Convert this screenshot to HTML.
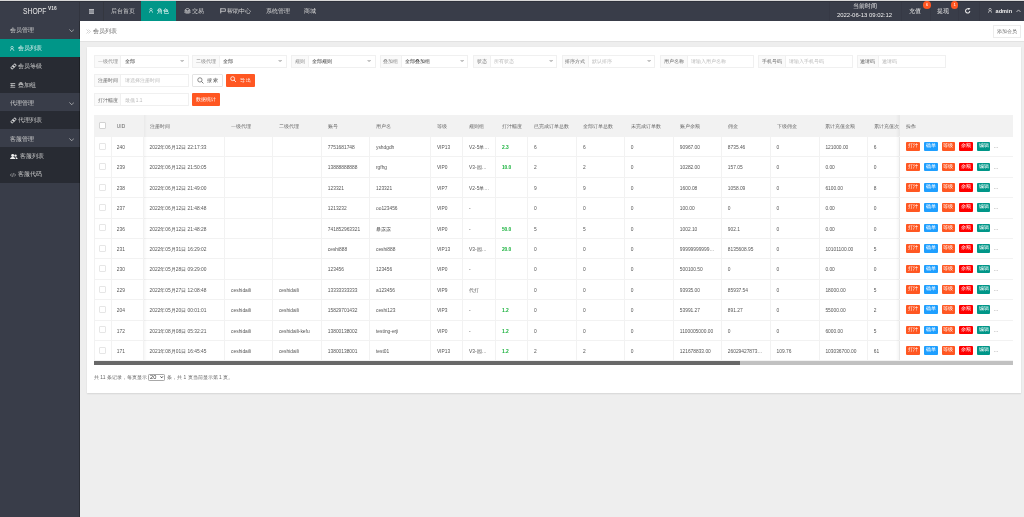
<!DOCTYPE html><html><head><meta charset="utf-8"><style>
*{margin:0;padding:0;box-sizing:border-box}
html,body{width:1024px;height:517px;overflow:hidden;background:#eeeeee;font-family:"Liberation Sans",sans-serif;color:#333}
#root{position:absolute;left:0;top:0;width:1024px;height:517px;will-change:transform}
.a{position:absolute;white-space:nowrap}
.nav{top:1px;height:20px;color:#d4d4d4;font-size:5.6px;line-height:20px}
.on{background:#009688;color:#fff}
.si{left:0;width:80px;font-size:5.6px;color:#d0d0d0}
.si.c{background:#282b33}
.si.on{background:#009688;color:#eaf5f4}
.grp{border:1px solid #f0f0f0;background:#fff}
.grp .lb{position:absolute;left:0;top:0;bottom:0;background:#fafafa;border-right:1px solid #f0f0f0;color:#888;font-size:4.7px;text-align:center}
.grp .ip{position:absolute;top:0;bottom:0;font-size:4.7px;color:#333;padding-left:3.2px}
.grp .ph{color:#bababa}
.btn{color:#fff;background:#ff5722;font-size:4.8px;text-align:center;border-radius:1px}
.tb{font-size:4.85px;color:#555}
.ck{width:7px;height:7px;border:1px solid #d8d8d8;background:#fff;border-radius:1px}
.ob{height:8.7px;line-height:8.7px;width:13.7px;font-size:4.7px;color:#fff;text-align:center;border-radius:1px}
.g{color:#16b13a;font-weight:bold}
</style></head><body><div id="root">
<div class="a" style="left:0;top:0;width:1024px;height:1px;background:#d9d9d9"></div>
<div class="a" style="left:0;top:1px;width:1024px;height:20px;background:#393d49;border-top:1px solid #2f323c"></div>
<div class="a" style="left:79px;top:2px;width:1px;height:19px;background:#32353f"></div>
<div class="a" style="left:22.5px;top:7.8px;font-size:8.2px;line-height:8.2px;color:#e8e8e8;transform:scaleX(0.83);transform-origin:0 0">SHOPF</div>
<div class="a" style="left:47.9px;top:6.3px;font-size:5.4px;line-height:5.4px;color:#e0e0e0;font-weight:bold;letter-spacing:0px;transform:scaleX(0.9);transform-origin:0 0">V16</div>
<div class="a" style="left:102.5px;top:2px;width:1px;height:19px;background:#34373f"></div>
<div class="a" style="left:89px;top:8.6px;width:5px;height:5.3px;background:#8e9199"></div>
<div class="a" style="left:89px;top:8.6px;width:5px;height:1.2px;background:#b4b6bb"></div>
<div class="a" style="left:89px;top:12.6px;width:5px;height:1.2px;background:#a8aab0"></div>
<div class="a nav " style="left:103px;width:38px;padding-left:7.5px">后台首页</div>
<div class="a nav on" style="left:141px;width:35px;padding-left:7.5px"><svg width="4" height="5" viewBox="0 0 8 10" style="vertical-align:0.2px;margin-left:0.9px;margin-right:3.6px"><circle cx="4" cy="3" r="2.3" fill="none" stroke="#e6f4f3" stroke-width="1.2"/><path d="M0.8 9.8 V8.3 C0.8 6.6 2.3 5.7 4 5.7 C5.7 5.7 7.2 6.6 7.2 8.3 V9.8" fill="none" stroke="#e6f4f3" stroke-width="1.2"/></svg>角色</div>
<div class="a nav " style="left:176px;width:36.3px;padding-left:7.5px"><svg width="7" height="5.5" viewBox="0 0 14 11" style="vertical-align:-0.8px;margin-right:1.4px"><path d="M2 6 C2 2.5 4.5 1 7 1 C9.5 1 12 2.5 12 6 Z" fill="none" stroke="#ddd" stroke-width="1.4"/><path d="M5 3.5 V6 M9 3.5 V6" stroke="#ddd" stroke-width="1"/><path d="M0.5 8.2 H13.5" stroke="#ddd" stroke-width="1.6"/><path d="M3 10.3 H11" stroke="#ddd" stroke-width="1.2"/></svg>交易</div>
<div class="a nav " style="left:212.3px;width:46.2px;padding-left:7.5px"><svg width="6" height="5.5" viewBox="0 0 12 11" style="vertical-align:-0.8px;margin-right:0.8px"><path d="M1.5 0.5 V10.8" stroke="#e4e4e4" stroke-width="1.6"/><path d="M1.5 1.5 H10.8 V6.6 H1.5" fill="none" stroke="#e4e4e4" stroke-width="1.4"/></svg>帮助中心</div>
<div class="a nav " style="left:258.5px;width:38.2px;padding-left:7.5px">系统管理</div>
<div class="a nav " style="left:296.7px;width:28px;padding-left:7.5px">商城</div>
<div class="a" style="left:828.6px;top:2px;width:1px;height:19px;background:#363945"></div>
<div class="a" style="left:901.3px;top:2px;width:1px;height:19px;background:#363945"></div>
<div class="a" style="left:929.5px;top:2px;width:1px;height:19px;background:#363945"></div>
<div class="a" style="left:957.5px;top:2px;width:1px;height:19px;background:#363945"></div>
<div class="a" style="left:979.3px;top:2px;width:1px;height:19px;background:#363945"></div>
<div class="a" style="left:828px;top:2.8px;width:73px;text-align:center;font-size:5.6px;line-height:6px;color:#e8e8e8">当前时间</div>
<div class="a" style="left:828px;top:12.4px;width:73px;text-align:center;font-size:5.95px;line-height:6px;color:#f0f0f0">2022-06-13 09:02:12</div>
<div class="a" style="left:908.8px;top:8.2px;font-size:5.6px;line-height:6px;color:#e6e6e6">充值</div>
<div class="a" style="left:923.1px;top:1.1px;width:7.6px;height:7.6px;border-radius:50%;background:#ff5722;color:#fff;font-size:4.4px;line-height:7.6px;text-align:center">6</div>
<div class="a" style="left:936.9px;top:8.2px;font-size:5.6px;line-height:6px;color:#e6e6e6">提现</div>
<div class="a" style="left:950.9px;top:1.1px;width:7.6px;height:7.6px;border-radius:50%;background:#ff5722;color:#fff;font-size:4.4px;line-height:7.6px;text-align:center">1</div>
<svg class="a" style="left:965.4px;top:8.4px" width="6" height="5.6" viewBox="0 0 10.7 10"><path d="M8.6 5.6 A3.8 3.8 0 1 1 5.6 1.4" fill="none" stroke="#eee" stroke-width="1.9"/><path d="M4.6 -0.4 L9.6 0.6 L6.6 4.2 Z" fill="#eee"/></svg>
<svg class="a" style="left:987.6px;top:8.2px" width="4.2" height="5.2" viewBox="0 0 8 10"><circle cx="4" cy="3" r="2.3" fill="none" stroke="#e6e6e6" stroke-width="1.2"/><path d="M0.8 9.8 V8.3 C0.8 6.6 2.3 5.7 4 5.7 C5.7 5.7 7.2 6.6 7.2 8.3 V9.8" fill="none" stroke="#e6e6e6" stroke-width="1.2"/></svg>
<div class="a" style="left:995.6px;top:8px;font-size:5.6px;line-height:6px;color:#eee;font-weight:bold">admin</div>
<svg class="a" style="left:1015.5px;top:9px" width="5" height="3.5" viewBox="0 0 10 7"><path d="M1 6 L5 1.8 L9 6" fill="none" stroke="#e6e6e6" stroke-width="1.4"/></svg>
<div class="a" style="left:0;top:21px;width:80px;height:496px;background:#393d49"></div>
<div class="a si" style="top:21.00px;height:17.95px;line-height:17.95px;padding-left:9.8px;padding-top:0.60px">会员管理</div>
<svg class="a" style="left:68.8px;top:28.50px" width="5.4" height="3.4" viewBox="0 0 10.8 6.8"><path d="M0.8 0.8 L5.4 5.6 L10 0.8" fill="none" stroke="#d0d0d0" stroke-width="1.3"/></svg>
<div class="a si on" style="top:38.95px;height:17.95px;line-height:17.95px;padding-left:17.8px;padding-top:0.60px">会员列表</div>
<div class="a si c" style="top:56.90px;height:17.95px;line-height:17.95px;padding-left:17.8px;padding-top:1.40px">会员等级</div>
<div class="a si c" style="top:74.85px;height:17.95px;line-height:17.95px;padding-left:17.8px;padding-top:2.00px">叠加组</div>
<div class="a si" style="top:92.80px;height:17.95px;line-height:17.95px;padding-left:9.8px;padding-top:2.20px">代理管理</div>
<svg class="a" style="left:68.8px;top:101.90px" width="5.4" height="3.4" viewBox="0 0 10.8 6.8"><path d="M0.8 0.8 L5.4 5.6 L10 0.8" fill="none" stroke="#d0d0d0" stroke-width="1.3"/></svg>
<div class="a si c" style="top:110.75px;height:17.95px;line-height:17.95px;padding-left:17.8px;padding-top:1.20px">代理列表</div>
<div class="a si" style="top:128.70px;height:17.95px;line-height:17.95px;padding-left:9.8px;padding-top:2.20px">客服管理</div>
<svg class="a" style="left:68.8px;top:137.80px" width="5.4" height="3.4" viewBox="0 0 10.8 6.8"><path d="M0.8 0.8 L5.4 5.6 L10 0.8" fill="none" stroke="#d0d0d0" stroke-width="1.3"/></svg>
<div class="a si c" style="top:146.65px;height:17.95px;line-height:17.95px;padding-left:20.2px;padding-top:1.70px">客服列表</div>
<div class="a si c" style="top:164.60px;height:17.95px;line-height:17.95px;padding-left:17.8px;padding-top:1.80px">客服代码</div>
<svg class="a" style="left:10.4px;top:45.55px" width="4.2" height="5.2" viewBox="0 0 8 10"><circle cx="4" cy="3" r="2.3" fill="none" stroke="#e6f4f3" stroke-width="1.2"/><path d="M0.8 9.8 V8.3 C0.8 6.6 2.3 5.7 4 5.7 C5.7 5.7 7.2 6.6 7.2 8.3 V9.8" fill="none" stroke="#e6f4f3" stroke-width="1.2"/></svg>
<svg class="a" style="left:9.9px;top:62.80px" width="7" height="7" viewBox="0 0 18 18"><g transform="rotate(-45 9 9)" fill="none" stroke="#f0f0f0" stroke-width="2.2"><rect x="1.2" y="6.2" width="8.6" height="5.6" rx="2.8"/><rect x="8.2" y="6.2" width="8.6" height="5.6" rx="2.8"/></g></svg>
<svg class="a" style="left:9.9px;top:116.65px" width="7" height="7" viewBox="0 0 18 18"><g transform="rotate(-45 9 9)" fill="none" stroke="#f0f0f0" stroke-width="2.2"><rect x="1.2" y="6.2" width="8.6" height="5.6" rx="2.8"/><rect x="8.2" y="6.2" width="8.6" height="5.6" rx="2.8"/></g></svg>
<svg class="a" style="left:10px;top:82.85px" width="5.6" height="4.8" viewBox="0 0 10 9"><path d="M0.5 1 H9.5 M0.5 4.5 H9.5 M0.5 8 H9.5" fill="none" stroke="#e6e6e6" stroke-width="1.3"/><path d="M3.2 2.5 V6.5" stroke="#e6e6e6" stroke-width="1.3"/></svg>
<svg class="a" style="left:10.3px;top:153.85px" width="7.7" height="5.6" viewBox="0 0 13.75 10"><circle cx="4.8" cy="2.7" r="2.6" fill="#f0f0f0"/><path d="M0 10 C0 6.6 2.3 5.5 4.8 5.5 C7.3 5.5 9.6 6.6 9.6 10 Z" fill="#f0f0f0"/><circle cx="9.9" cy="2.9" r="2.1" fill="#f0f0f0"/><path d="M10.1 5.6 C12.2 5.6 13.75 6.8 13.75 10 H10.5" fill="#f0f0f0"/></svg>
<svg class="a" style="left:9.8px;top:172.80px" width="6" height="4" viewBox="0 0 12 8"><path d="M3.5 1 L0.8 4 L3.5 7 M8.5 1 L11.2 4 L8.5 7 M7 0.5 L5 7.5" fill="none" stroke="#ddd" stroke-width="1"/></svg>
<div class="a" style="left:80px;top:21px;width:944px;height:20px;background:#fff"></div>
<div class="a" style="left:80px;top:41px;width:944px;height:1px;background:#e2e2e2"></div>
<svg class="a" style="left:86px;top:29px" width="5.2" height="5" viewBox="0 0 10.4 10"><path d="M1 1 L5 5 L1 9 M5 1 L9 5 L5 9" fill="none" stroke="#aaa" stroke-width="1"/></svg>
<div class="a" style="left:92.8px;top:28.4px;font-size:5.6px;line-height:6px;color:#666">会员列表</div>
<div class="a" style="left:993.3px;top:25.3px;width:27.3px;height:12.4px;border:1px solid #ececec;background:#fff;font-size:4.8px;line-height:10.4px;padding-top:0.6px;text-align:center;color:#777">添加会员</div>
<div class="a" style="left:79px;top:21px;width:1px;height:18px;background:rgba(0,0,0,.28)"></div>
<div class="a" style="left:79px;top:57px;width:1px;height:460px;background:rgba(0,0,0,.28)"></div>
<div class="a" style="left:86.5px;top:46.7px;width:934.4px;height:346.1px;background:#fff;box-shadow:0 1px 1.5px rgba(0,0,0,.1),0 0 1px rgba(0,0,0,.06)"></div>
<div class="a grp" style="left:94.2px;top:55.3px;width:94.5px;height:12.5px"><div class="lb" style="width:26.2px;line-height:10.5px;padding-top:0.9px;color:#888">一级代理</div><div class="ip" style="left:26.2px;right:0;line-height:10.5px;padding-top:0.9px">全部</div><svg class="a" style="right:3.6px;top:3.65px" width="4.2" height="2.5" viewBox="0 0 8 4.8"><path d="M0 0 H8 L4 4.8 Z" fill="#c2c2c2"/></svg></div>
<div class="a grp" style="left:192.4px;top:55.3px;width:94.4px;height:12.5px"><div class="lb" style="width:26.2px;line-height:10.5px;padding-top:0.9px;color:#888">二级代理</div><div class="ip" style="left:26.2px;right:0;line-height:10.5px;padding-top:0.9px">全部</div><svg class="a" style="right:3.6px;top:3.65px" width="4.2" height="2.5" viewBox="0 0 8 4.8"><path d="M0 0 H8 L4 4.8 Z" fill="#c2c2c2"/></svg></div>
<div class="a grp" style="left:291.3px;top:55.3px;width:84.4px;height:12.5px"><div class="lb" style="width:16.4px;line-height:10.5px;padding-top:0.9px;color:#888">规则</div><div class="ip" style="left:16.4px;right:0;line-height:10.5px;padding-top:0.9px">全部规则</div><svg class="a" style="right:3.6px;top:3.65px" width="4.2" height="2.5" viewBox="0 0 8 4.8"><path d="M0 0 H8 L4 4.8 Z" fill="#c2c2c2"/></svg></div>
<div class="a grp" style="left:379.6px;top:55.3px;width:88.9px;height:12.5px"><div class="lb" style="width:21.4px;line-height:10.5px;padding-top:0.9px;color:#888">叠加组</div><div class="ip" style="left:21.4px;right:0;line-height:10.5px;padding-top:0.9px">全部叠加组</div><svg class="a" style="right:3.6px;top:3.65px" width="4.2" height="2.5" viewBox="0 0 8 4.8"><path d="M0 0 H8 L4 4.8 Z" fill="#c2c2c2"/></svg></div>
<div class="a grp" style="left:473.3px;top:55.3px;width:84.0px;height:12.5px"><div class="lb" style="width:16.4px;line-height:10.5px;padding-top:0.9px;color:#777">状态</div><div class="ip ph" style="left:16.4px;right:0;line-height:10.5px;padding-top:0.9px">所有状态</div><svg class="a" style="right:3.6px;top:3.65px" width="4.2" height="2.5" viewBox="0 0 8 4.8"><path d="M0 0 H8 L4 4.8 Z" fill="#c2c2c2"/></svg></div>
<div class="a grp" style="left:561.6px;top:55.3px;width:93.7px;height:12.5px"><div class="lb" style="width:26.4px;line-height:10.5px;padding-top:0.9px;color:#666">排序方式</div><div class="ip ph" style="left:26.4px;right:0;line-height:10.5px;padding-top:0.9px">默认排序</div><svg class="a" style="right:3.6px;top:3.65px" width="4.2" height="2.5" viewBox="0 0 8 4.8"><path d="M0 0 H8 L4 4.8 Z" fill="#c2c2c2"/></svg></div>
<div class="a grp" style="left:660.0px;top:55.3px;width:94.0px;height:12.5px"><div class="lb" style="width:26.7px;line-height:10.5px;padding-top:0.9px;color:#666">用户名称</div><div class="ip ph" style="left:26.7px;right:0;line-height:10.5px;padding-top:0.9px">请输入用户名称</div></div>
<div class="a grp" style="left:758.4px;top:55.3px;width:94.3px;height:12.5px"><div class="lb" style="width:26.4px;line-height:10.5px;padding-top:0.9px;color:#666">手机号码</div><div class="ip ph" style="left:26.4px;right:0;line-height:10.5px;padding-top:0.9px">请输入手机号码</div></div>
<div class="a grp" style="left:856.8px;top:55.3px;width:89.2px;height:12.5px"><div class="lb" style="width:20.9px;line-height:10.5px;padding-top:0.9px;color:#666">邀请码</div><div class="ip ph" style="left:20.9px;right:0;line-height:10.5px;padding-top:0.9px">邀请码</div></div>
<div class="a grp" style="left:94.2px;top:73.6px;width:94.5px;height:13.2px"><div class="lb" style="width:26.2px;line-height:11.2px;padding-top:0.9px;color:#666">注册时间</div><div class="ip ph" style="left:26.2px;right:0;line-height:11.2px;padding-top:0.9px">请选择注册时间</div></div>
<div class="a" style="left:192.4px;top:73.6px;width:30.3px;height:13.2px;border:1px solid #e4e4e4;border-radius:1px;background:#fff;font-size:4.8px;line-height:11.2px;color:#555;padding-left:13.6px;letter-spacing:1.1px">搜索</div>
<svg class="a" style="left:197px;top:76.50px" width="7" height="7" viewBox="0 0 12 12"><circle cx="5" cy="5" r="3.7" fill="none" stroke="#666" stroke-width="1.3"/><path d="M7.7 7.7 L11 11" stroke="#666" stroke-width="1.5"/></svg>
<div class="a btn" style="left:226.2px;top:73.6px;width:28.8px;height:13.2px;line-height:13.2px;padding-left:10.9px;letter-spacing:1.1px">导出</div>
<svg class="a" style="left:230.2px;top:76.40px" width="6.4" height="6.4" viewBox="0 0 12 12"><circle cx="5" cy="5" r="3.7" fill="none" stroke="#fff" stroke-width="1.5"/><path d="M7.7 7.7 L11 11" stroke="#fff" stroke-width="1.7"/></svg>
<div class="a grp" style="left:94.2px;top:92.9px;width:94.5px;height:13.1px"><div class="lb" style="width:26.2px;line-height:11.1px;padding-top:0.9px;color:#666">打汁幅度</div><div class="ip ph" style="left:26.2px;right:0;line-height:11.1px;padding-top:0.9px">最低 1.1</div></div>
<div class="a btn" style="left:192.4px;top:92.9px;width:27.4px;height:13.1px;line-height:13.1px;font-size:4.6px">数据统计</div>
<div class="a" style="left:94px;top:115.4px;width:919px;height:20.599999999999994px;background:#f2f2f2"></div>
<div class="a" style="left:94px;top:136px;width:919px;height:1px;background:#f2f2f2"></div>
<div class="a" style="left:94px;top:156px;width:919px;height:1px;background:#f2f2f2"></div>
<div class="a" style="left:94px;top:177px;width:919px;height:1px;background:#f2f2f2"></div>
<div class="a" style="left:94px;top:197px;width:919px;height:1px;background:#f2f2f2"></div>
<div class="a" style="left:94px;top:218px;width:919px;height:1px;background:#f2f2f2"></div>
<div class="a" style="left:94px;top:238px;width:919px;height:1px;background:#f2f2f2"></div>
<div class="a" style="left:94px;top:258px;width:919px;height:1px;background:#f2f2f2"></div>
<div class="a" style="left:94px;top:279px;width:919px;height:1px;background:#f2f2f2"></div>
<div class="a" style="left:94px;top:299px;width:919px;height:1px;background:#f2f2f2"></div>
<div class="a" style="left:94px;top:320px;width:919px;height:1px;background:#f2f2f2"></div>
<div class="a" style="left:94px;top:340px;width:919px;height:1px;background:#f2f2f2"></div>
<div class="a" style="left:94px;top:360px;width:919px;height:1px;background:#f2f2f2"></div>
<div class="a" style="left:94px;top:115.4px;width:1px;height:244.89px;background:#f2f2f2"></div>
<div class="a" style="left:111px;top:115.4px;width:1px;height:244.89px;background:#f2f2f2"></div>
<div class="a" style="left:143px;top:115.4px;width:1px;height:244.89px;background:#f2f2f2"></div>
<div class="a" style="left:224px;top:115.4px;width:1px;height:244.89px;background:#f2f2f2"></div>
<div class="a" style="left:272px;top:115.4px;width:1px;height:244.89px;background:#f2f2f2"></div>
<div class="a" style="left:321px;top:115.4px;width:1px;height:244.89px;background:#f2f2f2"></div>
<div class="a" style="left:369px;top:115.4px;width:1px;height:244.89px;background:#f2f2f2"></div>
<div class="a" style="left:430px;top:115.4px;width:1px;height:244.89px;background:#f2f2f2"></div>
<div class="a" style="left:462px;top:115.4px;width:1px;height:244.89px;background:#f2f2f2"></div>
<div class="a" style="left:495px;top:115.4px;width:1px;height:244.89px;background:#f2f2f2"></div>
<div class="a" style="left:527px;top:115.4px;width:1px;height:244.89px;background:#f2f2f2"></div>
<div class="a" style="left:576px;top:115.4px;width:1px;height:244.89px;background:#f2f2f2"></div>
<div class="a" style="left:624px;top:115.4px;width:1px;height:244.89px;background:#f2f2f2"></div>
<div class="a" style="left:673px;top:115.4px;width:1px;height:244.89px;background:#f2f2f2"></div>
<div class="a" style="left:721px;top:115.4px;width:1px;height:244.89px;background:#f2f2f2"></div>
<div class="a" style="left:770px;top:115.4px;width:1px;height:244.89px;background:#f2f2f2"></div>
<div class="a" style="left:819px;top:115.4px;width:1px;height:244.89px;background:#f2f2f2"></div>
<div class="a" style="left:867px;top:115.4px;width:1px;height:244.89px;background:#f2f2f2"></div>
<div class="a tb" style="left:116.80px;top:117.00px;line-height:20.599999999999994px;color:#666">UID</div>
<div class="a tb" style="left:149.60px;top:117.00px;line-height:20.599999999999994px;color:#666">注册时间</div>
<div class="a tb" style="left:231.10px;top:117.00px;line-height:20.599999999999994px;color:#666">一级代理</div>
<div class="a tb" style="left:278.90px;top:117.00px;line-height:20.599999999999994px;color:#666">二级代理</div>
<div class="a tb" style="left:327.80px;top:117.00px;line-height:20.599999999999994px;color:#666">账号</div>
<div class="a tb" style="left:376.00px;top:117.00px;line-height:20.599999999999994px;color:#666">用户名</div>
<div class="a tb" style="left:436.90px;top:117.00px;line-height:20.599999999999994px;color:#666">等级</div>
<div class="a tb" style="left:469.10px;top:117.00px;line-height:20.599999999999994px;color:#666">规则组</div>
<div class="a tb" style="left:501.90px;top:117.00px;line-height:20.599999999999994px;color:#666">打汁幅度</div>
<div class="a tb" style="left:533.90px;top:117.00px;line-height:20.599999999999994px;color:#666">已完成订单总数</div>
<div class="a tb" style="left:583.00px;top:117.00px;line-height:20.599999999999994px;color:#666">全部订单总数</div>
<div class="a tb" style="left:630.80px;top:117.00px;line-height:20.599999999999994px;color:#666">未完成订单数</div>
<div class="a tb" style="left:679.80px;top:117.00px;line-height:20.599999999999994px;color:#666">账户余额</div>
<div class="a tb" style="left:727.80px;top:117.00px;line-height:20.599999999999994px;color:#666">佣金</div>
<div class="a tb" style="left:776.60px;top:117.00px;line-height:20.599999999999994px;color:#666">下级佣金</div>
<div class="a tb" style="left:825.40px;top:117.00px;line-height:20.599999999999994px;color:#666">累计充值金额</div>
<div class="a tb" style="left:873.80px;top:117.00px;line-height:20.599999999999994px;color:#666">累计充值次数</div>
<div class="a ck" style="left:99.4px;top:122.3px;border-color:#d2d2d2"></div>
<div class="a ck" style="left:99.4px;top:142.90px;border-color:#e6e6e6"></div>
<div class="a tb" style="left:116.80px;top:138.00px;line-height:20.39px">240</div>
<div class="a tb" style="left:149.60px;top:138.00px;line-height:20.39px">2022年06月12日 22:17:33</div>
<div class="a tb" style="left:327.80px;top:138.00px;line-height:20.39px">7751681748</div>
<div class="a tb" style="left:376.00px;top:138.00px;line-height:20.39px">yshdgdh</div>
<div class="a tb" style="left:436.90px;top:138.00px;line-height:20.39px">VIP13</div>
<div class="a tb" style="left:469.10px;top:138.00px;line-height:20.39px">V2-5单…</div>
<div class="a tb g" style="left:501.90px;top:138.00px;line-height:20.39px">2.3</div>
<div class="a tb" style="left:533.90px;top:138.00px;line-height:20.39px">6</div>
<div class="a tb" style="left:583.00px;top:138.00px;line-height:20.39px">6</div>
<div class="a tb" style="left:630.80px;top:138.00px;line-height:20.39px">0</div>
<div class="a tb" style="left:679.80px;top:138.00px;line-height:20.39px">90967.00</div>
<div class="a tb" style="left:727.80px;top:138.00px;line-height:20.39px">8735.46</div>
<div class="a tb" style="left:776.60px;top:138.00px;line-height:20.39px">0</div>
<div class="a tb" style="left:825.40px;top:138.00px;line-height:20.39px">121000.00</div>
<div class="a tb" style="left:873.80px;top:138.00px;line-height:20.39px">6</div>
<div class="a ck" style="left:99.4px;top:163.29px;border-color:#e6e6e6"></div>
<div class="a tb" style="left:116.80px;top:158.39px;line-height:20.39px">239</div>
<div class="a tb" style="left:149.60px;top:158.39px;line-height:20.39px">2022年06月12日 21:50:05</div>
<div class="a tb" style="left:327.80px;top:158.39px;line-height:20.39px">13888888888</div>
<div class="a tb" style="left:376.00px;top:158.39px;line-height:20.39px">rgfhg</div>
<div class="a tb" style="left:436.90px;top:158.39px;line-height:20.39px">VIP0</div>
<div class="a tb" style="left:469.10px;top:158.39px;line-height:20.39px">V3-园…</div>
<div class="a tb g" style="left:501.90px;top:158.39px;line-height:20.39px">10.0</div>
<div class="a tb" style="left:533.90px;top:158.39px;line-height:20.39px">2</div>
<div class="a tb" style="left:583.00px;top:158.39px;line-height:20.39px">2</div>
<div class="a tb" style="left:630.80px;top:158.39px;line-height:20.39px">0</div>
<div class="a tb" style="left:679.80px;top:158.39px;line-height:20.39px">10282.00</div>
<div class="a tb" style="left:727.80px;top:158.39px;line-height:20.39px">157.05</div>
<div class="a tb" style="left:776.60px;top:158.39px;line-height:20.39px">0</div>
<div class="a tb" style="left:825.40px;top:158.39px;line-height:20.39px">0.00</div>
<div class="a tb" style="left:873.80px;top:158.39px;line-height:20.39px">0</div>
<div class="a ck" style="left:99.4px;top:183.68px;border-color:#e6e6e6"></div>
<div class="a tb" style="left:116.80px;top:178.78px;line-height:20.39px">238</div>
<div class="a tb" style="left:149.60px;top:178.78px;line-height:20.39px">2022年06月12日 21:49:00</div>
<div class="a tb" style="left:327.80px;top:178.78px;line-height:20.39px">123321</div>
<div class="a tb" style="left:376.00px;top:178.78px;line-height:20.39px">123321</div>
<div class="a tb" style="left:436.90px;top:178.78px;line-height:20.39px">VIP7</div>
<div class="a tb" style="left:469.10px;top:178.78px;line-height:20.39px">V2-5单…</div>
<div class="a tb" style="left:533.90px;top:178.78px;line-height:20.39px">9</div>
<div class="a tb" style="left:583.00px;top:178.78px;line-height:20.39px">9</div>
<div class="a tb" style="left:630.80px;top:178.78px;line-height:20.39px">0</div>
<div class="a tb" style="left:679.80px;top:178.78px;line-height:20.39px">1600.08</div>
<div class="a tb" style="left:727.80px;top:178.78px;line-height:20.39px">1058.09</div>
<div class="a tb" style="left:776.60px;top:178.78px;line-height:20.39px">0</div>
<div class="a tb" style="left:825.40px;top:178.78px;line-height:20.39px">6100.00</div>
<div class="a tb" style="left:873.80px;top:178.78px;line-height:20.39px">8</div>
<div class="a ck" style="left:99.4px;top:204.07px;border-color:#e6e6e6"></div>
<div class="a tb" style="left:116.80px;top:199.17px;line-height:20.39px">237</div>
<div class="a tb" style="left:149.60px;top:199.17px;line-height:20.39px">2022年06月12日 21:48:48</div>
<div class="a tb" style="left:327.80px;top:199.17px;line-height:20.39px">1213232</div>
<div class="a tb" style="left:376.00px;top:199.17px;line-height:20.39px">oo123456</div>
<div class="a tb" style="left:436.90px;top:199.17px;line-height:20.39px">VIP0</div>
<div class="a tb" style="left:469.10px;top:199.17px;line-height:20.39px">-</div>
<div class="a tb" style="left:533.90px;top:199.17px;line-height:20.39px">0</div>
<div class="a tb" style="left:583.00px;top:199.17px;line-height:20.39px">0</div>
<div class="a tb" style="left:630.80px;top:199.17px;line-height:20.39px">0</div>
<div class="a tb" style="left:679.80px;top:199.17px;line-height:20.39px">100.00</div>
<div class="a tb" style="left:727.80px;top:199.17px;line-height:20.39px">0</div>
<div class="a tb" style="left:776.60px;top:199.17px;line-height:20.39px">0</div>
<div class="a tb" style="left:825.40px;top:199.17px;line-height:20.39px">0.00</div>
<div class="a tb" style="left:873.80px;top:199.17px;line-height:20.39px">0</div>
<div class="a ck" style="left:99.4px;top:224.46px;border-color:#e6e6e6"></div>
<div class="a tb" style="left:116.80px;top:219.56px;line-height:20.39px">236</div>
<div class="a tb" style="left:149.60px;top:219.56px;line-height:20.39px">2022年06月12日 21:48:28</div>
<div class="a tb" style="left:327.80px;top:219.56px;line-height:20.39px">741852963321</div>
<div class="a tb" style="left:376.00px;top:219.56px;line-height:20.39px">暴露露</div>
<div class="a tb" style="left:436.90px;top:219.56px;line-height:20.39px">VIP0</div>
<div class="a tb" style="left:469.10px;top:219.56px;line-height:20.39px">-</div>
<div class="a tb g" style="left:501.90px;top:219.56px;line-height:20.39px">50.0</div>
<div class="a tb" style="left:533.90px;top:219.56px;line-height:20.39px">5</div>
<div class="a tb" style="left:583.00px;top:219.56px;line-height:20.39px">5</div>
<div class="a tb" style="left:630.80px;top:219.56px;line-height:20.39px">0</div>
<div class="a tb" style="left:679.80px;top:219.56px;line-height:20.39px">1002.10</div>
<div class="a tb" style="left:727.80px;top:219.56px;line-height:20.39px">902.1</div>
<div class="a tb" style="left:776.60px;top:219.56px;line-height:20.39px">0</div>
<div class="a tb" style="left:825.40px;top:219.56px;line-height:20.39px">0.00</div>
<div class="a tb" style="left:873.80px;top:219.56px;line-height:20.39px">0</div>
<div class="a ck" style="left:99.4px;top:244.85px;border-color:#e6e6e6"></div>
<div class="a tb" style="left:116.80px;top:239.95px;line-height:20.39px">231</div>
<div class="a tb" style="left:149.60px;top:239.95px;line-height:20.39px">2022年05月31日 16:29:02</div>
<div class="a tb" style="left:327.80px;top:239.95px;line-height:20.39px">ceshi888</div>
<div class="a tb" style="left:376.00px;top:239.95px;line-height:20.39px">ceshi888</div>
<div class="a tb" style="left:436.90px;top:239.95px;line-height:20.39px">VIP13</div>
<div class="a tb" style="left:469.10px;top:239.95px;line-height:20.39px">V3-园…</div>
<div class="a tb g" style="left:501.90px;top:239.95px;line-height:20.39px">20.0</div>
<div class="a tb" style="left:533.90px;top:239.95px;line-height:20.39px">0</div>
<div class="a tb" style="left:583.00px;top:239.95px;line-height:20.39px">0</div>
<div class="a tb" style="left:630.80px;top:239.95px;line-height:20.39px">0</div>
<div class="a tb" style="left:679.80px;top:239.95px;line-height:20.39px">99999999999…</div>
<div class="a tb" style="left:727.80px;top:239.95px;line-height:20.39px">8135608.95</div>
<div class="a tb" style="left:776.60px;top:239.95px;line-height:20.39px">0</div>
<div class="a tb" style="left:825.40px;top:239.95px;line-height:20.39px">10101100.00</div>
<div class="a tb" style="left:873.80px;top:239.95px;line-height:20.39px">5</div>
<div class="a ck" style="left:99.4px;top:265.24px;border-color:#e6e6e6"></div>
<div class="a tb" style="left:116.80px;top:260.34px;line-height:20.39px">230</div>
<div class="a tb" style="left:149.60px;top:260.34px;line-height:20.39px">2022年05月28日 09:29:00</div>
<div class="a tb" style="left:327.80px;top:260.34px;line-height:20.39px">123456</div>
<div class="a tb" style="left:376.00px;top:260.34px;line-height:20.39px">123456</div>
<div class="a tb" style="left:436.90px;top:260.34px;line-height:20.39px">VIP0</div>
<div class="a tb" style="left:469.10px;top:260.34px;line-height:20.39px">-</div>
<div class="a tb" style="left:533.90px;top:260.34px;line-height:20.39px">0</div>
<div class="a tb" style="left:583.00px;top:260.34px;line-height:20.39px">0</div>
<div class="a tb" style="left:630.80px;top:260.34px;line-height:20.39px">0</div>
<div class="a tb" style="left:679.80px;top:260.34px;line-height:20.39px">500100.50</div>
<div class="a tb" style="left:727.80px;top:260.34px;line-height:20.39px">0</div>
<div class="a tb" style="left:776.60px;top:260.34px;line-height:20.39px">0</div>
<div class="a tb" style="left:825.40px;top:260.34px;line-height:20.39px">0.00</div>
<div class="a tb" style="left:873.80px;top:260.34px;line-height:20.39px">0</div>
<div class="a ck" style="left:99.4px;top:285.63px;border-color:#e6e6e6"></div>
<div class="a tb" style="left:116.80px;top:280.73px;line-height:20.39px">229</div>
<div class="a tb" style="left:149.60px;top:280.73px;line-height:20.39px">2022年05月27日 12:08:48</div>
<div class="a tb" style="left:231.10px;top:280.73px;line-height:20.39px">ceshidaili</div>
<div class="a tb" style="left:278.90px;top:280.73px;line-height:20.39px">ceshidaili</div>
<div class="a tb" style="left:327.80px;top:280.73px;line-height:20.39px">13333333333</div>
<div class="a tb" style="left:376.00px;top:280.73px;line-height:20.39px">a123456</div>
<div class="a tb" style="left:436.90px;top:280.73px;line-height:20.39px">VIP9</div>
<div class="a tb" style="left:469.10px;top:280.73px;line-height:20.39px">代打</div>
<div class="a tb" style="left:533.90px;top:280.73px;line-height:20.39px">0</div>
<div class="a tb" style="left:583.00px;top:280.73px;line-height:20.39px">0</div>
<div class="a tb" style="left:630.80px;top:280.73px;line-height:20.39px">0</div>
<div class="a tb" style="left:679.80px;top:280.73px;line-height:20.39px">93935.00</div>
<div class="a tb" style="left:727.80px;top:280.73px;line-height:20.39px">85937.54</div>
<div class="a tb" style="left:776.60px;top:280.73px;line-height:20.39px">0</div>
<div class="a tb" style="left:825.40px;top:280.73px;line-height:20.39px">18000.00</div>
<div class="a tb" style="left:873.80px;top:280.73px;line-height:20.39px">5</div>
<div class="a ck" style="left:99.4px;top:306.02px;border-color:#e6e6e6"></div>
<div class="a tb" style="left:116.80px;top:301.12px;line-height:20.39px">204</div>
<div class="a tb" style="left:149.60px;top:301.12px;line-height:20.39px">2022年05月20日 00:01:01</div>
<div class="a tb" style="left:231.10px;top:301.12px;line-height:20.39px">ceshidaili</div>
<div class="a tb" style="left:278.90px;top:301.12px;line-height:20.39px">ceshidaili</div>
<div class="a tb" style="left:327.80px;top:301.12px;line-height:20.39px">15829701432</div>
<div class="a tb" style="left:376.00px;top:301.12px;line-height:20.39px">ceshi123</div>
<div class="a tb" style="left:436.90px;top:301.12px;line-height:20.39px">VIP3</div>
<div class="a tb" style="left:469.10px;top:301.12px;line-height:20.39px">-</div>
<div class="a tb g" style="left:501.90px;top:301.12px;line-height:20.39px">1.2</div>
<div class="a tb" style="left:533.90px;top:301.12px;line-height:20.39px">0</div>
<div class="a tb" style="left:583.00px;top:301.12px;line-height:20.39px">0</div>
<div class="a tb" style="left:630.80px;top:301.12px;line-height:20.39px">0</div>
<div class="a tb" style="left:679.80px;top:301.12px;line-height:20.39px">53991.27</div>
<div class="a tb" style="left:727.80px;top:301.12px;line-height:20.39px">891.27</div>
<div class="a tb" style="left:776.60px;top:301.12px;line-height:20.39px">0</div>
<div class="a tb" style="left:825.40px;top:301.12px;line-height:20.39px">55000.00</div>
<div class="a tb" style="left:873.80px;top:301.12px;line-height:20.39px">2</div>
<div class="a ck" style="left:99.4px;top:326.41px;border-color:#e6e6e6"></div>
<div class="a tb" style="left:116.80px;top:321.51px;line-height:20.39px">172</div>
<div class="a tb" style="left:149.60px;top:321.51px;line-height:20.39px">2021年08月08日 05:32:21</div>
<div class="a tb" style="left:231.10px;top:321.51px;line-height:20.39px">ceshidaili</div>
<div class="a tb" style="left:278.90px;top:321.51px;line-height:20.39px">ceshidaili-kefu</div>
<div class="a tb" style="left:327.80px;top:321.51px;line-height:20.39px">13800138002</div>
<div class="a tb" style="left:376.00px;top:321.51px;line-height:20.39px">testing-erji</div>
<div class="a tb" style="left:436.90px;top:321.51px;line-height:20.39px">VIP0</div>
<div class="a tb" style="left:469.10px;top:321.51px;line-height:20.39px">-</div>
<div class="a tb g" style="left:501.90px;top:321.51px;line-height:20.39px">1.2</div>
<div class="a tb" style="left:533.90px;top:321.51px;line-height:20.39px">0</div>
<div class="a tb" style="left:583.00px;top:321.51px;line-height:20.39px">0</div>
<div class="a tb" style="left:630.80px;top:321.51px;line-height:20.39px">0</div>
<div class="a tb" style="left:679.80px;top:321.51px;line-height:20.39px">1100005000.00</div>
<div class="a tb" style="left:727.80px;top:321.51px;line-height:20.39px">0</div>
<div class="a tb" style="left:776.60px;top:321.51px;line-height:20.39px">0</div>
<div class="a tb" style="left:825.40px;top:321.51px;line-height:20.39px">6000.00</div>
<div class="a tb" style="left:873.80px;top:321.51px;line-height:20.39px">5</div>
<div class="a ck" style="left:99.4px;top:346.80px;border-color:#e6e6e6"></div>
<div class="a tb" style="left:116.80px;top:341.90px;line-height:20.39px">171</div>
<div class="a tb" style="left:149.60px;top:341.90px;line-height:20.39px">2021年08月01日 16:45:45</div>
<div class="a tb" style="left:231.10px;top:341.90px;line-height:20.39px">ceshidaili</div>
<div class="a tb" style="left:278.90px;top:341.90px;line-height:20.39px">ceshidaili</div>
<div class="a tb" style="left:327.80px;top:341.90px;line-height:20.39px">13800138001</div>
<div class="a tb" style="left:376.00px;top:341.90px;line-height:20.39px">test01</div>
<div class="a tb" style="left:436.90px;top:341.90px;line-height:20.39px">VIP13</div>
<div class="a tb" style="left:469.10px;top:341.90px;line-height:20.39px">V3-园…</div>
<div class="a tb g" style="left:501.90px;top:341.90px;line-height:20.39px">1.2</div>
<div class="a tb" style="left:533.90px;top:341.90px;line-height:20.39px">2</div>
<div class="a tb" style="left:583.00px;top:341.90px;line-height:20.39px">2</div>
<div class="a tb" style="left:630.80px;top:341.90px;line-height:20.39px">0</div>
<div class="a tb" style="left:679.80px;top:341.90px;line-height:20.39px">121678833.00</div>
<div class="a tb" style="left:727.80px;top:341.90px;line-height:20.39px">26029427873…</div>
<div class="a tb" style="left:776.60px;top:341.90px;line-height:20.39px">109.76</div>
<div class="a tb" style="left:825.40px;top:341.90px;line-height:20.39px">103036700.00</div>
<div class="a tb" style="left:873.80px;top:341.90px;line-height:20.39px">61</div>
<div class="a" style="left:896px;top:115.4px;width:3px;height:244.89px;background:linear-gradient(to right,rgba(0,0,0,0),rgba(0,0,0,0.04))"></div>
<div class="a" style="left:899px;top:115.4px;width:114px;height:244.89px;background:#fff"></div>
<div class="a" style="left:899px;top:115.4px;width:114px;height:20.599999999999994px;background:#f2f2f2"></div>
<div class="a" style="left:899px;top:115.4px;width:1px;height:244.89px;background:#e8e8e8"></div>
<div class="a tb" style="left:906px;top:117.00px;line-height:20.599999999999994px">操作</div>
<div class="a" style="left:899px;top:136px;width:114px;height:1px;background:#f2f2f2"></div>
<div class="a" style="left:899px;top:156px;width:114px;height:1px;background:#f2f2f2"></div>
<div class="a" style="left:899px;top:177px;width:114px;height:1px;background:#f2f2f2"></div>
<div class="a" style="left:899px;top:197px;width:114px;height:1px;background:#f2f2f2"></div>
<div class="a" style="left:899px;top:218px;width:114px;height:1px;background:#f2f2f2"></div>
<div class="a" style="left:899px;top:238px;width:114px;height:1px;background:#f2f2f2"></div>
<div class="a" style="left:899px;top:258px;width:114px;height:1px;background:#f2f2f2"></div>
<div class="a" style="left:899px;top:279px;width:114px;height:1px;background:#f2f2f2"></div>
<div class="a" style="left:899px;top:299px;width:114px;height:1px;background:#f2f2f2"></div>
<div class="a" style="left:899px;top:320px;width:114px;height:1px;background:#f2f2f2"></div>
<div class="a" style="left:899px;top:340px;width:114px;height:1px;background:#f2f2f2"></div>
<div class="a" style="left:899px;top:360px;width:114px;height:1px;background:#f2f2f2"></div>
<div class="a ob" style="left:906.2px;top:142.20px;background:#ff5722">打汁</div>
<div class="a ob" style="left:923.9px;top:142.20px;background:#1e9fff">确单</div>
<div class="a ob" style="left:941.6px;top:142.20px;background:#ff5722">等级</div>
<div class="a ob" style="left:959.1px;top:142.20px;background:#ff0000">余额</div>
<div class="a ob" style="left:976.8px;top:142.20px;background:#009688">编辑</div>
<svg class="a" style="left:994.2px;top:147.30px" width="4" height="1" viewBox="0 0 8 2"><circle cx="1" cy="1" r="0.9" fill="#aaa"/><circle cx="4" cy="1" r="0.9" fill="#aaa"/><circle cx="7" cy="1" r="0.9" fill="#aaa"/></svg>
<div class="a ob" style="left:906.2px;top:162.59px;background:#ff5722">打汁</div>
<div class="a ob" style="left:923.9px;top:162.59px;background:#1e9fff">确单</div>
<div class="a ob" style="left:941.6px;top:162.59px;background:#ff5722">等级</div>
<div class="a ob" style="left:959.1px;top:162.59px;background:#ff0000">余额</div>
<div class="a ob" style="left:976.8px;top:162.59px;background:#009688">编辑</div>
<svg class="a" style="left:994.2px;top:167.69px" width="4" height="1" viewBox="0 0 8 2"><circle cx="1" cy="1" r="0.9" fill="#aaa"/><circle cx="4" cy="1" r="0.9" fill="#aaa"/><circle cx="7" cy="1" r="0.9" fill="#aaa"/></svg>
<div class="a ob" style="left:906.2px;top:182.98px;background:#ff5722">打汁</div>
<div class="a ob" style="left:923.9px;top:182.98px;background:#1e9fff">确单</div>
<div class="a ob" style="left:941.6px;top:182.98px;background:#ff5722">等级</div>
<div class="a ob" style="left:959.1px;top:182.98px;background:#ff0000">余额</div>
<div class="a ob" style="left:976.8px;top:182.98px;background:#009688">编辑</div>
<svg class="a" style="left:994.2px;top:188.08px" width="4" height="1" viewBox="0 0 8 2"><circle cx="1" cy="1" r="0.9" fill="#aaa"/><circle cx="4" cy="1" r="0.9" fill="#aaa"/><circle cx="7" cy="1" r="0.9" fill="#aaa"/></svg>
<div class="a ob" style="left:906.2px;top:203.37px;background:#ff5722">打汁</div>
<div class="a ob" style="left:923.9px;top:203.37px;background:#1e9fff">确单</div>
<div class="a ob" style="left:941.6px;top:203.37px;background:#ff5722">等级</div>
<div class="a ob" style="left:959.1px;top:203.37px;background:#ff0000">余额</div>
<div class="a ob" style="left:976.8px;top:203.37px;background:#009688">编辑</div>
<svg class="a" style="left:994.2px;top:208.47px" width="4" height="1" viewBox="0 0 8 2"><circle cx="1" cy="1" r="0.9" fill="#aaa"/><circle cx="4" cy="1" r="0.9" fill="#aaa"/><circle cx="7" cy="1" r="0.9" fill="#aaa"/></svg>
<div class="a ob" style="left:906.2px;top:223.76px;background:#ff5722">打汁</div>
<div class="a ob" style="left:923.9px;top:223.76px;background:#1e9fff">确单</div>
<div class="a ob" style="left:941.6px;top:223.76px;background:#ff5722">等级</div>
<div class="a ob" style="left:959.1px;top:223.76px;background:#ff0000">余额</div>
<div class="a ob" style="left:976.8px;top:223.76px;background:#009688">编辑</div>
<svg class="a" style="left:994.2px;top:228.86px" width="4" height="1" viewBox="0 0 8 2"><circle cx="1" cy="1" r="0.9" fill="#aaa"/><circle cx="4" cy="1" r="0.9" fill="#aaa"/><circle cx="7" cy="1" r="0.9" fill="#aaa"/></svg>
<div class="a ob" style="left:906.2px;top:244.15px;background:#ff5722">打汁</div>
<div class="a ob" style="left:923.9px;top:244.15px;background:#1e9fff">确单</div>
<div class="a ob" style="left:941.6px;top:244.15px;background:#ff5722">等级</div>
<div class="a ob" style="left:959.1px;top:244.15px;background:#ff0000">余额</div>
<div class="a ob" style="left:976.8px;top:244.15px;background:#009688">编辑</div>
<svg class="a" style="left:994.2px;top:249.25px" width="4" height="1" viewBox="0 0 8 2"><circle cx="1" cy="1" r="0.9" fill="#aaa"/><circle cx="4" cy="1" r="0.9" fill="#aaa"/><circle cx="7" cy="1" r="0.9" fill="#aaa"/></svg>
<div class="a ob" style="left:906.2px;top:264.54px;background:#ff5722">打汁</div>
<div class="a ob" style="left:923.9px;top:264.54px;background:#1e9fff">确单</div>
<div class="a ob" style="left:941.6px;top:264.54px;background:#ff5722">等级</div>
<div class="a ob" style="left:959.1px;top:264.54px;background:#ff0000">余额</div>
<div class="a ob" style="left:976.8px;top:264.54px;background:#009688">编辑</div>
<svg class="a" style="left:994.2px;top:269.64px" width="4" height="1" viewBox="0 0 8 2"><circle cx="1" cy="1" r="0.9" fill="#aaa"/><circle cx="4" cy="1" r="0.9" fill="#aaa"/><circle cx="7" cy="1" r="0.9" fill="#aaa"/></svg>
<div class="a ob" style="left:906.2px;top:284.93px;background:#ff5722">打汁</div>
<div class="a ob" style="left:923.9px;top:284.93px;background:#1e9fff">确单</div>
<div class="a ob" style="left:941.6px;top:284.93px;background:#ff5722">等级</div>
<div class="a ob" style="left:959.1px;top:284.93px;background:#ff0000">余额</div>
<div class="a ob" style="left:976.8px;top:284.93px;background:#009688">编辑</div>
<svg class="a" style="left:994.2px;top:290.03px" width="4" height="1" viewBox="0 0 8 2"><circle cx="1" cy="1" r="0.9" fill="#aaa"/><circle cx="4" cy="1" r="0.9" fill="#aaa"/><circle cx="7" cy="1" r="0.9" fill="#aaa"/></svg>
<div class="a ob" style="left:906.2px;top:305.32px;background:#ff5722">打汁</div>
<div class="a ob" style="left:923.9px;top:305.32px;background:#1e9fff">确单</div>
<div class="a ob" style="left:941.6px;top:305.32px;background:#ff5722">等级</div>
<div class="a ob" style="left:959.1px;top:305.32px;background:#ff0000">余额</div>
<div class="a ob" style="left:976.8px;top:305.32px;background:#009688">编辑</div>
<svg class="a" style="left:994.2px;top:310.42px" width="4" height="1" viewBox="0 0 8 2"><circle cx="1" cy="1" r="0.9" fill="#aaa"/><circle cx="4" cy="1" r="0.9" fill="#aaa"/><circle cx="7" cy="1" r="0.9" fill="#aaa"/></svg>
<div class="a ob" style="left:906.2px;top:325.71px;background:#ff5722">打汁</div>
<div class="a ob" style="left:923.9px;top:325.71px;background:#1e9fff">确单</div>
<div class="a ob" style="left:941.6px;top:325.71px;background:#ff5722">等级</div>
<div class="a ob" style="left:959.1px;top:325.71px;background:#ff0000">余额</div>
<div class="a ob" style="left:976.8px;top:325.71px;background:#009688">编辑</div>
<svg class="a" style="left:994.2px;top:330.81px" width="4" height="1" viewBox="0 0 8 2"><circle cx="1" cy="1" r="0.9" fill="#aaa"/><circle cx="4" cy="1" r="0.9" fill="#aaa"/><circle cx="7" cy="1" r="0.9" fill="#aaa"/></svg>
<div class="a ob" style="left:906.2px;top:346.10px;background:#ff5722">打汁</div>
<div class="a ob" style="left:923.9px;top:346.10px;background:#1e9fff">确单</div>
<div class="a ob" style="left:941.6px;top:346.10px;background:#ff5722">等级</div>
<div class="a ob" style="left:959.1px;top:346.10px;background:#ff0000">余额</div>
<div class="a ob" style="left:976.8px;top:346.10px;background:#009688">编辑</div>
<svg class="a" style="left:994.2px;top:351.20px" width="4" height="1" viewBox="0 0 8 2"><circle cx="1" cy="1" r="0.9" fill="#aaa"/><circle cx="4" cy="1" r="0.9" fill="#aaa"/><circle cx="7" cy="1" r="0.9" fill="#aaa"/></svg>
<div class="a" style="left:144px;top:115.4px;width:3px;height:244.89px;background:linear-gradient(to right,rgba(0,0,0,0.035),rgba(0,0,0,0))"></div>
<div class="a" style="left:94px;top:360.59px;width:919px;height:4.3px;background:#c1c1c1"></div>
<div class="a" style="left:94px;top:360.59px;width:645.60px;height:4.3px;background:#686868"></div>
<div class="a" style="left:94px;top:374.8px;font-size:4.9px;line-height:6px;color:#666">共 11 条记录，每页显示</div>
<div class="a" style="left:147.5px;top:373.6px;width:17.9px;height:7.9px;border:1px solid #a8a8a8;border-radius:1.2px;font-size:5.6px;line-height:5.9px;padding-left:1.6px;color:#333">20</div>
<svg class="a" style="left:160.2px;top:376px" width="3.4" height="2.4" viewBox="0 0 8 6"><path d="M1 1 L4 4.6 L7 1" fill="none" stroke="#222" stroke-width="2"/></svg>
<div class="a" style="left:167.2px;top:374.8px;font-size:4.9px;line-height:6px;color:#666">条，共 1 页当前显示第 1 页。</div>
</div></body></html>
